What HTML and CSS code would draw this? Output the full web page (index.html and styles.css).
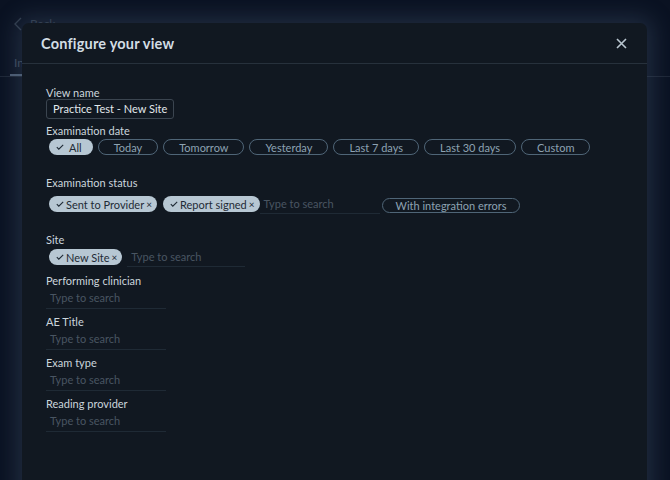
FILE: index.html
```html
<!DOCTYPE html>
<html lang="en">
<head>
  <meta charset="UTF-8">
  <meta name="viewport" content="width=device-width, initial-scale=1.0">
  <title>Configure your view</title>
  <link rel="stylesheet" href="styles.css">
</head>
<body>
  <!-- page behind the dialog -->
  <div class="page">
    <div class="back">
      <svg width="8" height="14" viewBox="0 0 8 14"><polyline points="7,1 1,7 7,13" fill="none" stroke="currentColor" stroke-width="1.4"/></svg>
      <span>Back</span>
    </div>
    <div class="tabs">
      <div class="tab active">In</div>
    </div>
  </div>

  <div class="modal">
    <div class="modal-header">
      <h2>Configure your view</h2>
      <button class="close">
        <svg width="11" height="11" viewBox="0 0 11 11"><path d="M1 1 L10 10 M10 1 L1 10" stroke="currentColor" stroke-width="1.6"/></svg>
      </button>
    </div>

    <div class="modal-body">
      <label class="label">View name</label>
      <div class="text-input">Practice Test - New Site</div>

      <div class="section date">
        <label class="label">Examination date</label>
        <div class="chips">
          <span class="chip selected date-all">
            <svg class="check" width="8" height="6" viewBox="0 0 8 6"><polyline points="0.8,3.2 2.8,5.2 7.2,0.8" fill="none" stroke="currentColor" stroke-width="1.1"/></svg>All
          </span>
          <span class="chip outline">Today</span>
          <span class="chip outline">Tomorrow</span>
          <span class="chip outline">Yesterday</span>
          <span class="chip outline">Last 7 days</span>
          <span class="chip outline">Last 30 days</span>
          <span class="chip outline">Custom</span>
        </div>
      </div>

      <div class="section status">
        <label class="label">Examination status</label>
        <div class="chips status-row">
          <span class="chip selected">
            <svg class="check" width="8" height="6" viewBox="0 0 8 6"><polyline points="0.8,3.2 2.8,5.2 7.2,0.8" fill="none" stroke="currentColor" stroke-width="1.1"/></svg>Sent to Provider<span class="remove">×</span>
          </span>
          <span class="chip selected">
            <svg class="check" width="8" height="6" viewBox="0 0 8 6"><polyline points="0.8,3.2 2.8,5.2 7.2,0.8" fill="none" stroke="currentColor" stroke-width="1.1"/></svg>Report signed<span class="remove">×</span>
          </span>
          <span class="search inline">Type to search</span>
          <span class="chip outline small">With integration errors</span>
        </div>
      </div>

      <div class="field-site">
        <label class="label">Site</label>
        <div class="chips site-row">
          <span class="chip selected">
            <svg class="check" width="8" height="6" viewBox="0 0 8 6"><polyline points="0.8,3.2 2.8,5.2 7.2,0.8" fill="none" stroke="currentColor" stroke-width="1.1"/></svg>New Site<span class="remove">×</span>
          </span>
          <span class="search inline">Type to search</span>
        </div>
      </div>

      <div class="field">
        <label class="label">Performing clinician</label>
        <div class="search">Type to search</div>
      </div>
      <div class="field">
        <label class="label">AE Title</label>
        <div class="search">Type to search</div>
      </div>
      <div class="field">
        <label class="label">Exam type</label>
        <div class="search">Type to search</div>
      </div>
      <div class="field">
        <label class="label">Reading provider</label>
        <div class="search">Type to search</div>
      </div>
    </div>
  </div>
</body>
</html>
```

FILE: styles.css
```css
body {
  margin: 0;
  height: 480px;
  overflow: hidden;
  background: #0a1222;
  font-family: Lato, "Open Sans", sans-serif;
  color: #c9d4dc;
}

/* page under the overlay */
.page {
  padding-top: 16px;
}
.back {
  display: flex;
  align-items: center;
  gap: 8px;
  padding-left: 14px;
  color: #2f3a4a;
  font-size: 12px;
}
.tabs {
  margin-top: 20px;
  border-bottom: 1px solid #1d2636;
  padding-left: 10px;
}
.tab {
  display: inline-block;
  width: 14px;
  padding: 0 0 4px 4px;
  color: #3a4658;
  font-size: 12px;
  border-bottom: 2px solid #4a5a70;
}

/* dialog */
.modal {
  position: absolute;
  left: 22px;
  top: 23px;
  width: 625px;
  height: 480px;
  background: #111821;
  border-radius: 7px 7px 0 0;
  box-shadow: 0 0 22px 6px rgba(90, 110, 140, 0.28);
}
.modal-header {
  height: 40px;
  display: flex;
  align-items: center;
  justify-content: space-between;
  padding: 0 20px 0 19px;
  border-bottom: 1px solid #27313c;
}
.modal-header h2 {
  margin: 0;
  font-size: 14.5px;
  font-weight: 700;
  color: #d3dde4;
  letter-spacing: 0.2px;
}
.close {
  border: none;
  background: none;
  padding: 0;
  color: #b9c6d0;
  display: flex;
}

.modal-body {
  padding: 23px 24px 0 24px;
}
.label {
  display: block;
  font-size: 11px;
  line-height: 12px;
  color: #cbd5dc;
}
.text-input {
  width: 116px;
  height: 18px;
  line-height: 18px;
  padding: 0 4px 0 6px;
  border: 1px solid #3b4550;
  border-radius: 3px;
  font-size: 11px;
  color: #e2e8ec;
}

.section {
  margin-top: 6px;
  margin-bottom: 22px;
}
.chips {
  display: flex;
  align-items: center;
  gap: 5px;
  margin-top: 2px;
  padding-left: 3px;
}
.chip {
  display: inline-flex;
  align-items: center;
  height: 16px;
  box-sizing: border-box;
  border-radius: 8px;
  font-size: 11px;
  white-space: nowrap;
}
.chip.selected {
  background: #b7c7d3;
  color: #1f2b36;
  padding: 0 5px 0 7px;
}
.chip.selected .check {
  margin-right: 2px;
}
.chip.date-all {
  padding: 0 11px 0 7px;
  margin-right: 0;
}
.chip.date-all .check {
  margin-right: 5px;
}
.remove {
  margin-left: 2px;
  font-size: 10px;
}
.chip.outline {
  border: 1px solid #4f6577;
  color: #8da2b2;
  padding: 0 15px;
}
.chip.small {
  height: 15px;
  padding: 0 13px;
  margin-left: -4px;
  margin-bottom: -3px;
}

.search {
  width: 116px;
  height: 21px;
  line-height: 21px;
  padding-left: 4px;
  border-bottom: 1px solid #1f2a35;
  font-size: 11px;
  color: #495562;
}
.search.inline {
  height: 17px;
  line-height: 15px;
  padding-left: 4px;
  margin-bottom: -2px;
}
.status-row {
  margin-top: 7px;
  gap: 6px;
}
.status-row .search {
  margin-left: -6px;
}
.site-row {
  margin-top: 3px;
}
.site-row .search {
  width: 114px;
}

.field-site {
  margin-bottom: 10px;
}
.field {
  margin-bottom: 7px;
}
```
